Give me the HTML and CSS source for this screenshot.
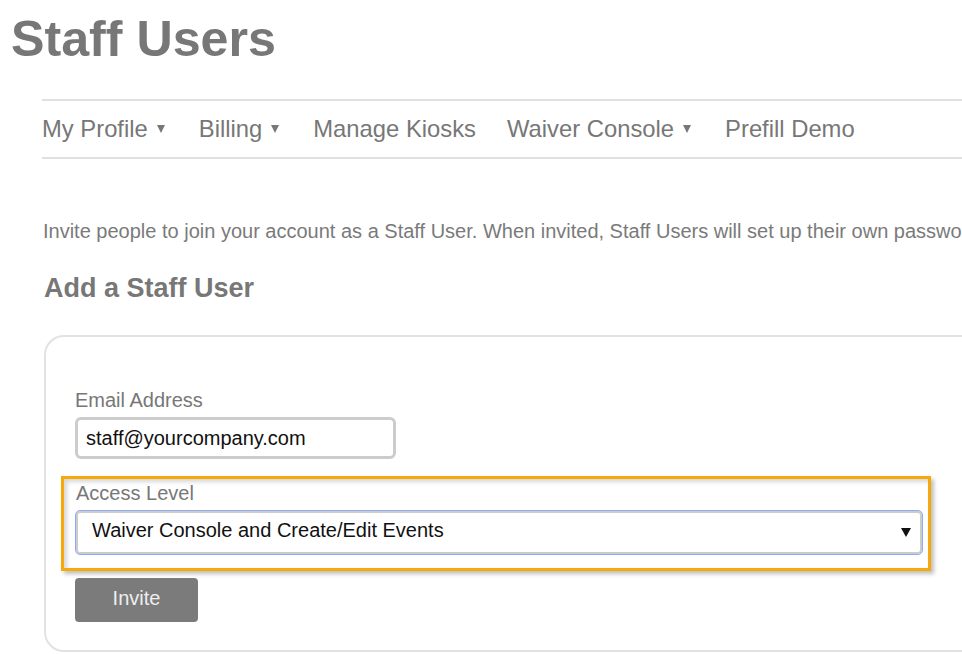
FILE: index.html
```html
<!DOCTYPE html>
<html lang="en">
<head>
<meta charset="utf-8">
<title>Staff Users</title>
<link rel="stylesheet" href="styles.css">
</head>
<body>
<div class="page">
  <h1 class="title">Staff Users</h1>
  <nav class="nav">
    <span class="nav-item">My Profile<i class="caret"></i></span>
    <span class="nav-item">Billing<i class="caret"></i></span>
    <span class="nav-item">Manage Kiosks</span>
    <span class="nav-item">Waiver Console<i class="caret"></i></span>
    <span class="nav-item">Prefill Demo</span>
  </nav>
  <main class="main">
    <p class="intro">Invite people to join your account as a Staff User. When invited, Staff Users will set up their own passwords.</p>
    <h2 class="subtitle">Add a Staff User</h2>
    <div class="card">
      <label class="label">Email Address</label>
      <div class="input">staff@yourcompany.com</div>
      <div class="highlight">
        <label class="label">Access Level</label>
        <div class="select">
          <span>Waiver Console and Create/Edit Events</span>
          <i class="select-caret"></i>
        </div>
      </div>
      <div class="button">Invite</div>
    </div>
  </main>
</div>
</body>
</html>
```

FILE: styles.css
```css
html, body {
  margin: 0;
  padding: 0;
  overflow: hidden;
  background: #ffffff;
}

body {
  font-family: "Liberation Sans", Arial, sans-serif;
  color: #777777;
  width: 962px;
  height: 654px;
}

.page {
  width: 962px;
  overflow: hidden;
}

.title {
  margin: 11px 0 0 11px;
  font-size: 50.2px;
  line-height: 56px;
  font-weight: bold;
  color: #777777;
}

.nav {
  margin: 32px 0 0 42px;
  border-top: 2px solid #e0e0e0;
  border-bottom: 2px solid #e0e0e0;
  padding: 14px 0;
  display: flex;
  gap: 31px;
  font-size: 23.8px;
  line-height: 28px;
  white-space: nowrap;
  color: #777777;
}

.caret {
  display: inline-block;
  width: 0;
  height: 0;
  margin: 0 3px 4px 9px;
  border-left: 4.5px solid transparent;
  border-right: 4.5px solid transparent;
  border-top: 8px solid #777777;
}

.main {
  margin-left: 43px;
}

.intro {
  margin: 60px 0 0 0;
  font-size: 20px;
  line-height: 24px;
  white-space: nowrap;
  color: #7a7a7a;
}

.subtitle {
  margin: 29px 0 0 1px;
  font-size: 27px;
  line-height: 32px;
  font-weight: bold;
  color: #777777;
}

.card {
  margin: 31px 0 0 1px;
  width: 1000px;
  border: 2px solid #e2e2e2;
  border-radius: 20px;
  padding: 51px 0 28px 29px;
  box-sizing: border-box;
}

.label {
  display: block;
  font-size: 20px;
  line-height: 24px;
  color: #777777;
}

.input {
  margin-top: 5px;
  box-sizing: border-box;
  width: 321px;
  height: 42px;
  border: 3px solid #cccccc;
  border-radius: 6px;
  padding: 0 8px;
  font-size: 20px;
  line-height: 36px;
  color: #111111;
}

.highlight {
  margin: 17px 0 0 -14px;
  box-sizing: border-box;
  width: 870px;
  border: 3px solid #f6aa0a;
  padding: 2px 5px 13px 11px;
  box-shadow: 3px 3px 4px rgba(0, 0, 0, 0.25), inset 3px 3px 4px rgba(0, 0, 0, 0.16);
}

.highlight .label {
  margin-left: 1px;
}

.select {
  margin-top: 5px;
  box-sizing: border-box;
  height: 45px;
  border: 1px solid #8eaaf4;
  border-radius: 5px;
  box-shadow: inset 0 0 0 2px #cccccc;
  padding: 0 11px 4px 16px;
  display: flex;
  align-items: center;
  justify-content: space-between;
  font-size: 20px;
  line-height: 35px;
  color: #111111;
  background: #ffffff;
}

.select-caret {
  display: block;
  width: 0;
  height: 0;
  margin-top: 4px;
  border-left: 5px solid transparent;
  border-right: 5px solid transparent;
  border-top: 9px solid #111111;
}

.button {
  margin-top: 7px;
  width: 123px;
  height: 44px;
  box-sizing: border-box;
  padding-bottom: 3px;
  background: #7b7b7b;
  border-radius: 4px;
  text-align: center;
  font-size: 20px;
  line-height: 41px;
  color: #eeeeee;
}
```
